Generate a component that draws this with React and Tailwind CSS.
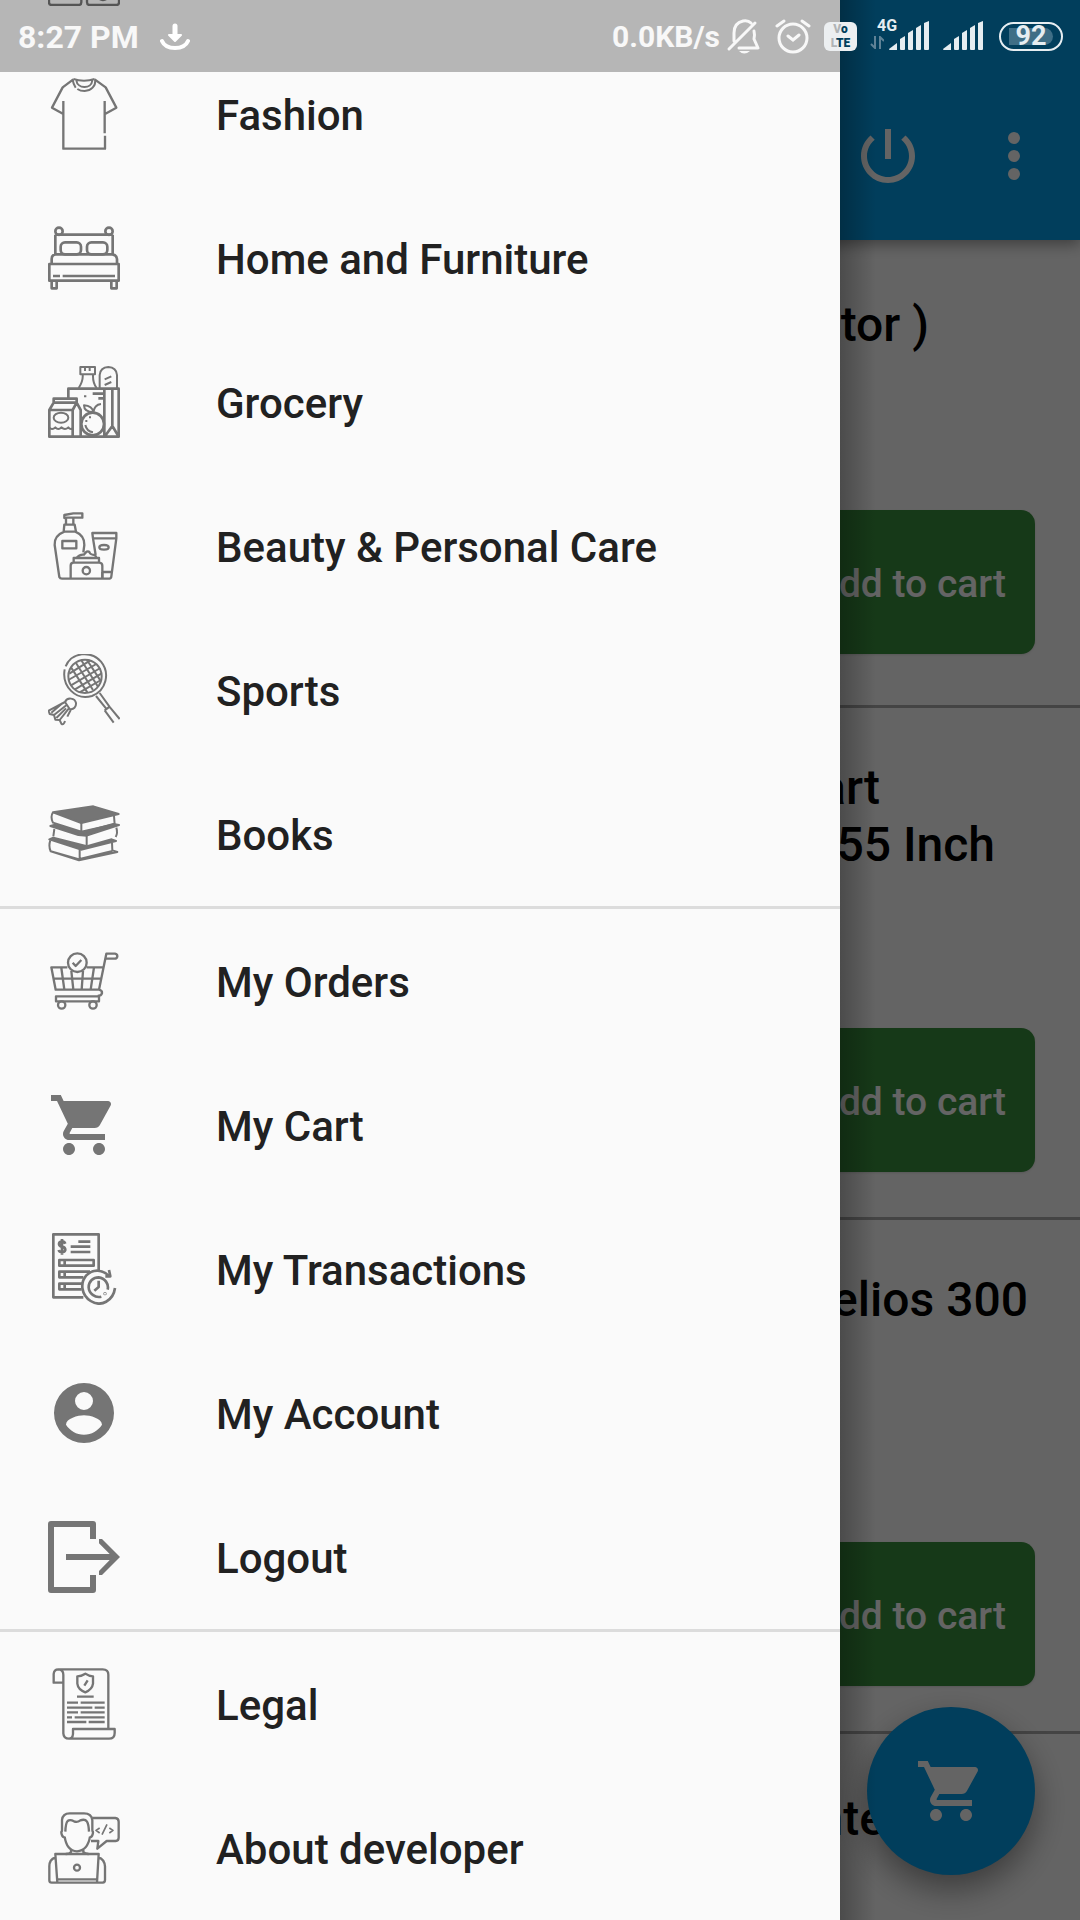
import React from "react";

const MATERIAL_CART =
  "M7 18c-1.1 0-1.99.9-1.99 2S5.9 22 7 22s2-.9 2-2-.9-2-2-2zM1 2v2h2l3.6 7.59-1.35 2.45c-.16.28-.25.61-.25.96 0 1.1.9 2 2 2h12v-2H7.42c-.14 0-.25-.11-.25-.25l.03-.12.9-1.63h7.45c.75 0 1.41-.41 1.75-1.03l3.58-6.49c.08-.14.12-.31.12-.48 0-.55-.45-1-1-1H5.21l-.94-2H1zm16 16c-1.1 0-1.99.9-1.99 2s.89 2 1.99 2 2-.9 2-2-.9-2-2-2z";

function LineIcon({ box, width = 8, children }) {
  return (
    <svg viewBox={box} className="size-[72px] shrink-0" fill="none" stroke="currentColor" strokeWidth={width} strokeLinejoin="round" aria-hidden="true">
      {children}
    </svg>
  );
}

function SolidIcon({ d }) {
  return (
    <svg viewBox="0 0 24 24" className="size-[72px] shrink-0" fill="currentColor" aria-hidden="true">
      <path d={d} />
    </svg>
  );
}

const icons = {
  appliances: (
    <LineIcon box="0 0 216 216" width={7}>
      <rect x="3" y="8" width="97" height="205" rx="8" />
      <rect x="117" y="90" width="96" height="123" rx="8" />
      <circle cx="165" cy="180" r="18" />
    </LineIcon>
  ),
  fashion: (
    <LineIcon box="144 234 216 216" width={7}>
      <path d="M220 238 188 262 156 323 190 342M284 238 317 262 349 323 315 342M190 303V446H315V407M314 400V303" />
      <path d="M220 237Q252 247 284 237M218 240Q220 252 227 263M286 240C287 258 274 272 254 273Q241 273 232 267M229 241C232 267 274 269 277 241" strokeWidth="6" />
    </LineIcon>
  ),
  home: (
    <LineIcon box="54 36 216 216">
      <circle cx="87" cy="64" r="11" />
      <circle cx="237" cy="64" r="11" />
      <path d="M76 74H248M76 74V134M248 74V134M58 162H266V212H58ZM65 161V147Q65 134 77 133H247Q260 135 261 147V161M65 212V235H80V212M244 212V235H260V212" />
      <rect x="92" y="97" width="61" height="36" rx="13" />
      <rect x="171" y="97" width="61" height="36" rx="13" />
      <path d="M69 198H90M98 198H255" />
    </LineIcon>
  ),
  grocery: (
    <LineIcon box="54 468 216 216">
      <path d="M151 471H195V493H151ZM165 471V483M179 471V483M158 494Q160 512 146 534M189 494Q188 518 200 534M209 534V495Q211 472 235 471Q259 472 261 495V534M224 508 244 499M224 525 244 516" strokeWidth="6" />
      <path d="M115 563V536H266V680H58V600L71 578H140L152 600V681M58 600H128V681M128 600 140 578M71 578V566H140V578M223 536V681M247 536V648M188 551H223M205 565H223M223 681 247 648 267 681" />
      <ellipse cx="93" cy="623" rx="22" ry="15" strokeWidth="6" />
      <path d="M58 653Q66 662 76 652Q85 662 94 652Q105 662 115 652Q121 660 128 655" strokeWidth="6" />
      <circle cx="188" cy="642" r="34" fill="#fafafa" />
      <path d="M166 645Q170 664 189 667M190 607Q162 606 162 586Q187 587 190 607Q193 584 213 582" strokeWidth="6" />
      <path d="M162 559H169M177 622H183M166 633H172" strokeWidth="6" />
    </LineIcon>
  ),
  beauty: (
    <LineIcon box="54 30 216 216" width={7}>
      <path d="M103 54V45L130 40H157V53H103ZM108 54V73M130 54V73M101 95 103 74H134L138 95M103 95H136Q164 107 163 135L160 157M103 95Q72 107 74 135L88 231Q90 236 96 236H239Q244 235 244 229L259 115M187 99H259V115H189ZM189 115 197 165M218 216H244M217 234V216" />
      <rect x="97" y="123" width="42" height="22" />
      <ellipse cx="222" cy="142" rx="14" ry="7" />
      <path d="M122 235V197Q122 188 131 188H208Q217 189 217 197V235M131 187V174H207V187M139 174Q149 162 162 164Q171 150 178 156Q181 165 195 165L200 174" />
      <circle cx="169" cy="212" r="11" />
    </LineIcon>
  ),
  sports: (
    <LineIcon box="54 462 216 216" width={6}>
      <path d="M107 499C125 456 183 451 213 485C241 519 229 571 186 588C137 603 95 559 104 508" />
      <circle cx="165" cy="529" r="50" />
      <path d="M123 502 172 577M138 489 189 570M154 481 204 560M171 480 213 544M118 521 181 481M115 540 199 492M123 556 211 504M135 568 215 520M149 577 213 540" />
      <path d="M198 588 231 629M209 579 240 622M224 631 240 619M224 631 251 668M240 622 269 657" />
      <path d="M105 606C112 590 135 594 138 609C139 620 131 630 119 627ZM105 606 56 632 59 642 72 645M109 616 72 645 76 659 89 660M116 626 89 660 94 671Q101 677 105 663M122 630 112 650M97 610 64 638M108 625 79 654" />
    </LineIcon>
  ),
  books: (
    <LineIcon box="54 24 216 216" width={6}>
      <path d="M69 67 190 49 266 72 154 99Z" fill="currentColor" />
      <path d="M69 67Q60 81 69 98L154 125 254 103 252 78M154 98V125M70 139 73 117M170 137V166M259 113Q264 129 257 141" />
      <path d="M61 108 75 104 155 128 250 102 267 105 170 137 145 135ZM58 148 70 143 171 169 245 148 258 153 153 179Z" fill="currentColor" />
      <path d="M61 151Q55 168 62 184L147 211 262 186 247 181 246 158M149 178V207M62 184 146 208 247 183" />
    </LineIcon>
  ),
  orders: (
    <LineIcon box="54 465 216 216" width={7}>
      <path d="M112 532H64L77 599H207L229 491H255Q262 492 262 499Q261 506 254 506H227M170 532H219M72 566H212M94 534 103 599M124 543 130 599M159 543 155 599M192 532 182 599M207 599Q217 601 216 610Q214 618 203 618M78 619H207V634H78Z" />
      <circle cx="142" cy="518" r="28" />
      <path d="M128 518 137 528 154 510" />
      <circle cx="95" cy="645" r="11" />
      <circle cx="189" cy="645" r="11" />
    </LineIcon>
  ),
  cart: <SolidIcon d={MATERIAL_CART} />,
  transactions: (
    <LineIcon box="54 459 216 216">
      <path d="M160 652H70V463H206V570M145 485H181M122 500H181M122 516H181" />
      <path d="M106 491Q103 484 96 484Q87 485 87 492Q88 499 96 500Q106 502 106 510Q104 517 96 517Q88 517 86 510M96 477V524" />
      <path d="M88 540H191V557H88ZM104 540V557M180 575H88V592H160M104 575V592M157 611H88V628H155M104 611V628" />
      <path d="M238 589C218 568 189 566 169 586C149 609 154 645 182 663C213 683 250 662 255 624M226 589H241L237 570M214 650C195 655 177 640 176 622C176 604 190 592 206 592C225 594 237 612 233 629M206 602V621L193 632" />
      <circle cx="225" cy="641" r="1" />
    </LineIcon>
  ),
  account: (
    <LineIcon box="54 21 216 216" width={0}>
      <path fillRule="evenodd" fill="currentColor" d="M162 39A90 90 0 1 0 162 219A90 90 0 1 0 162 39ZM162 66A27 27 0 1 1 162 120A27 27 0 1 1 162 66ZM162 194C139 194 120 182 108 164C108 146 144 136 162 136C180 136 216 146 216 164C204 182 185 194 162 194Z" />
    </LineIcon>
  ),
  logout: (
    <LineIcon box="54 453 216 216" width={18}>
      <path d="M189 507V462H63V660H189V615" />
      <path d="M108 561H260" strokeLinejoin="miter" />
      <path d="M207 507 216 507 270 561 216 615H207V603L248 561 207 520Z" fill="currentColor" stroke="none" />
    </LineIcon>
  ),
  legal: (
    <LineIcon box="54 54 216 216" width={7}>
      <path d="M100 98H71V72Q72 58 85 58H218Q235 58 235 74V236M85 58Q100 59 100 74V250Q101 266 117 266H237Q254 266 254 249V237H129V252Q128 266 116 266" />
      <path d="M166 71Q154 79 142 79V101Q144 119 166 127Q187 118 189 101V79Q177 79 166 71ZM173 91 163 107" />
      <path d="M141 140H191M111 158H144M152 158H224M111 173H187M194 173H224M111 187H144M152 187H224M111 202H126M134 202H224M111 216H169M176 216H224" />
    </LineIcon>
  ),
  developer: (
    <LineIcon box="54 486 216 216" width={7}>
      <path d="M96 542V510Q98 490 119 490H162Q185 490 187 511V542M106 545Q107 519 113 513Q120 507 132 514Q142 518 151 511Q165 506 171 515Q176 523 177 545M98 541Q92 543 95 553Q97 562 104 562M185 541Q191 543 188 553Q186 562 179 562M104 560Q110 603 141 604Q173 602 180 560M123 600V606Q120 612 107 612M160 600V606Q164 612 176 612" />
      <path d="M187 504H256Q266 505 266 515V563Q266 572 257 573H230L202 596 205 573H183" />
      <path d="M209 534 198 541 209 549M238 534 249 541 238 549M231 523 216 554" strokeWidth="5" />
      <path d="M76 612H206L201 698H82ZM76 622Q58 628 58 649V691Q58 698 65 698H218Q225 697 225 690V649Q223 627 205 622M82 688H201" />
      <circle cx="141" cy="653" r="9" />
    </LineIcon>
  ),
};

const groups = [
  [
    ["appliances", ""],
    ["fashion", "Fashion"],
    ["home", "Home and Furniture"],
    ["grocery", "Grocery"],
    ["beauty", "Beauty & Personal Care"],
    ["sports", "Sports"],
    ["books", "Books"],
  ],
  [
    ["orders", "My Orders"],
    ["cart", "My Cart"],
    ["transactions", "My Transactions"],
    ["account", "My Account"],
    ["logout", "Logout"],
  ],
  [
    ["legal", "Legal"],
    ["developer", "About developer"],
  ],
];

function Drawer() {
  return (
    <nav aria-label="Main menu" className="absolute inset-y-0 left-0 z-20 flex w-7/9 flex-col justify-end overflow-hidden bg-[#fafafa]">
      {groups.map((group, i) => (
        <ul key={i} className={i ? "shrink-0 border-t-3 border-[#dcdcdc]" : "shrink-0"}>
          {group.map(([icon, label]) => (
            <li key={icon}>
              <a href={"#" + icon} className="flex h-36 items-center gap-24 px-12 text-[42px]/[48px] font-medium text-[#212121]">
                <span className="text-[#757575]">{icons[icon]}</span>
                {label && <span className="pt-1">{label}</span>}
              </a>
            </li>
          ))}
        </ul>
      ))}
    </nav>
  );
}

function Signal() {
  return (
    <svg viewBox="0 0 40 30" className="h-[30px] w-10" fill="#e6edf1" aria-hidden="true">
      <path d="M0 28 8 22V29H1Q0 29 0 28Z" />
      <path d="M11 18 16 15V28Q16 29 15 29H12Q11 29 11 28Z" />
      <path d="M19 12 24 9V28Q24 29 23 29H20Q19 29 19 28Z" />
      <path d="M27 7 32 4V28Q32 29 31 29H28Q27 29 27 28Z" />
      <path d="M35 2 40 0V28Q40 29 39 29H36Q35 29 35 28Z" />
    </svg>
  );
}

function StatusBar() {
  return (
    <header className="absolute inset-x-0 top-0 z-30 flex h-[72px] items-center justify-between text-white/90">
      <div className="absolute inset-y-0 left-0 -z-10 w-7/9 bg-black/27" />
      <div className="flex items-center gap-[21px] pt-0.5 pl-[18px]">
        <span className="text-[32px]/[40px] font-bold">8:27 PM</span>
        <svg viewBox="0 0 30 28" className="h-7 w-[30px]" fill="none" stroke="#fff" strokeLinecap="round" aria-hidden="true">
          <path d="M2 18Q5 25 15 25Q25 25 28 18" strokeWidth="4" />
          <path d="M15 3V12" strokeWidth="5" />
          <path d="M9 12H21L15 18Z" fill="#fff" strokeWidth="2" strokeLinejoin="round" />
        </svg>
      </div>
      <div className="flex items-center pr-[17px]">
        <span className="mr-1.5 pt-0.5 text-[30px]/[40px] font-bold">0.0KB/s</span>
        <svg viewBox="0 0 34 36" className="mr-[15px] h-9 w-[34px]" fill="none" stroke="currentColor" strokeWidth="3" strokeLinecap="round" aria-hidden="true">
          <path d="M3 31 29 5M8 23V15Q8 5 17 3Q22 2 25 5M28 13Q29 17 28 21L32 30H13" strokeLinejoin="round" />
          <path d="M13 33H24Q18 38 13 33Z" fill="currentColor" stroke="none" />
        </svg>
        <svg viewBox="0 0 36 36" className="mr-[13px] size-9" fill="none" stroke="currentColor" strokeWidth="3" strokeLinecap="round" aria-hidden="true">
          <circle cx="18" cy="20" r="14" />
          <path d="M13 18 18 22 24 17M2 8 9 3M34 8 27 3" />
        </svg>
        <div className="mr-[13px] flex h-[29px] w-[33px] flex-col items-center justify-center rounded-md bg-[#eceff1] text-[12px]/[14px] font-black text-[#003e5c]">
          <div><span className="text-[#b0b4b6]">V</span>o</div>
          <div><span className="text-[#b0b4b6]">L</span>TE</div>
        </div>
        <div className="relative mr-3.5 pl-[19px]">
          <Signal />
          <span className="absolute -top-[3px] left-[7px] text-[16px]/[16px] font-bold text-[#e6edf1]">4G</span>
          <svg viewBox="0 0 14 13" className="absolute bottom-0.5 left-0 h-[13px] w-3.5" fill="none" stroke="#5f8296" strokeWidth="2" aria-hidden="true">
            <path d="M5 0V12L1 8M10 13V1L14 5" />
          </svg>
        </div>
        <div className="mr-4"><Signal /></div>
        <div className="flex h-[29px] w-16 rounded-full border-2 border-[#e6edf1] px-2 py-1">
          <span className="flex flex-1 items-center justify-center rounded-r-full bg-[#3f6e86] text-[27px]/[27px] font-bold text-[#e6edf1]">92</span>
        </div>
      </div>
    </header>
  );
}

function Product({ className, forSale = true, children }) {
  return (
    <article className={"flex shrink-0 flex-col border-b-3 border-[#aaaaaa] px-[45px] " + className}>
      <h2 className="flex flex-1 flex-col items-end text-5xl/[57px] font-medium whitespace-pre text-black">{children}</h2>
      {forSale && (
        <button type="button" className="h-36 self-end rounded-[14px] bg-[#388e3c] px-[29px] pt-1 text-[39px]/[46px] font-medium text-[#fafafa] shadow-sm">
          Add to cart
        </button>
      )}
    </article>
  );
}

export default function App() {
  return (
    <div className="relative flex h-screen flex-col overflow-hidden bg-[#fafafa] font-['Roboto',sans-serif]">
      <div className="relative z-10 flex items-center justify-end gap-[54px] bg-[#039be5] pt-[120px] pr-[30px] pb-12 text-[#fafafa] shadow-[0_4px_14px_rgba(0,0,0,0.4)]">
        <button type="button" aria-label="Power">
          <SolidIcon d="M13 3h-2v10h2V3zm4.83 2.17l-1.42 1.42C17.99 7.86 19 9.81 19 12c0 3.87-3.13 7-7 7s-7-3.13-7-7c0-2.19 1.01-4.14 2.58-5.42L6.17 5.17C4.23 6.82 3 9.26 3 12c0 4.97 4.03 9 9 9s9-4.03 9-9c0-2.74-1.23-5.18-3.17-6.83z" />
        </button>
        <button type="button" aria-label="More options">
          <SolidIcon d="M12 8a2 2 0 1 0 0-4 2 2 0 0 0 0 4zm0 2a2 2 0 1 0 0 4 2 2 0 0 0 0-4zm0 6a2 2 0 1 0 0 4 2 2 0 0 0 0-4z" />
        </button>
      </div>
      <main className="flex flex-1 flex-col overflow-hidden">
        <Product className="h-[468px] pt-14 pb-[51px]">
          <span className="pr-[106px]">tor )</span>
        </Product>
        <Product className="h-[512px] pt-[51px] pb-[45px]">
          <span className="pr-[155px]">art</span>
          <span className="pr-10">55 Inch</span>
        </Product>
        <Product className="h-[514px] pt-[51px] pb-[45px]">
          <span className="pr-[7px]">elios 300</span>
        </Product>
        <Product className="h-[514px] pt-14 pb-[45px]" forSale={false}>
          <span className="pr-[150px]">nte</span>
        </Product>
      </main>
      <button type="button" aria-label="Open cart" className="absolute right-[45px] bottom-[45px] flex size-[168px] items-center justify-center rounded-full bg-[#039be5] text-[#fafafa] shadow-[0_14px_32px_rgba(0,0,0,0.4)]">
        <SolidIcon d={MATERIAL_CART} />
      </button>
      <div className="absolute inset-0 z-10 bg-black/60" />
      <div className="absolute inset-y-0 left-7/9 z-10 w-9 bg-linear-to-r from-black/25 to-transparent" />
      <Drawer />
      <StatusBar />
    </div>
  );
}
